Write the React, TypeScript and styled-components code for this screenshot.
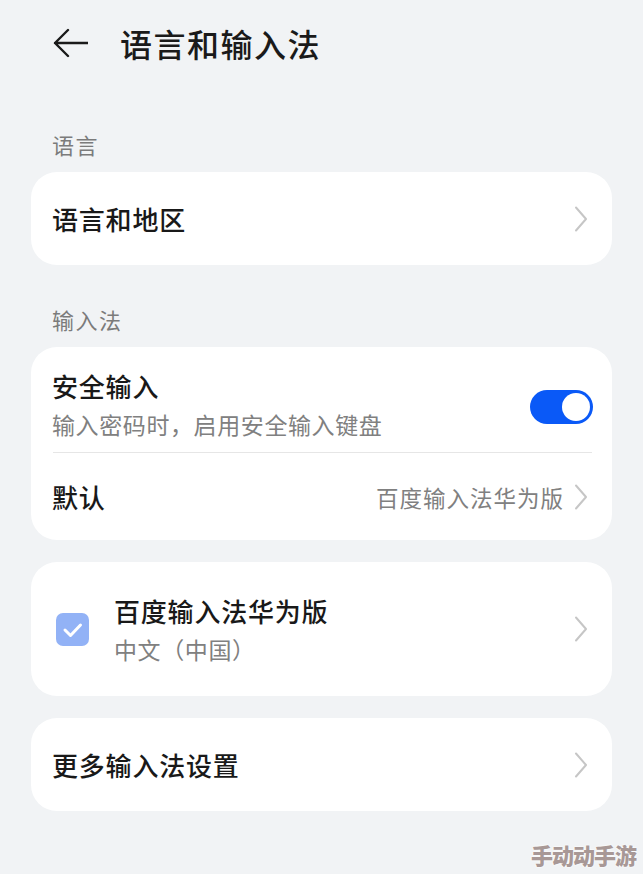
import React, { useState } from "react";
import styled, { createGlobalStyle } from "styled-components";

const GlobalStyle = createGlobalStyle`
  body {
    margin: 0;
    background: #f1f3f5;
    font-family: "Noto Sans CJK SC", "Noto Sans", sans-serif;
    color: #191919;
  }
`;

export default function App() {
  const [safeInput, setSafeInput] = useState(true);

  return (
    <Page>
      <GlobalStyle />
      <Header>
        <BackButton>
          <svg width="35" height="30" viewBox="0 0 35 30" fill="none">
            <path
              d="M15 2 L2 15 L15 28 M2 15 H35"
              stroke="#1a1a1a"
              strokeWidth="2.4"
              strokeLinecap="round"
              strokeLinejoin="round"
            />
          </svg>
        </BackButton>
        <Title>语言和输入法</Title>
      </Header>

      <SectionLabel top={43}>语言</SectionLabel>
      <Card>
        <Row height={93}>
          <ItemTitle>语言和地区</ItemTitle>
          <Chevron />
        </Row>
      </Card>

      <SectionLabel top={39}>输入法</SectionLabel>
      <Card>
        <ToggleRow>
          <TextBlock>
            <ItemTitle>安全输入</ItemTitle>
            <ItemSub>输入密码时，启用安全输入键盘</ItemSub>
          </TextBlock>
          <Switch on={safeInput} onClick={() => setSafeInput(!safeInput)}>
            <Knob />
          </Switch>
        </ToggleRow>
        <Divider />
        <Row height={87}>
          <ItemTitle>默认</ItemTitle>
          <RightSide>
            <ValueText>百度输入法华为版</ValueText>
            <Chevron />
          </RightSide>
        </Row>
      </Card>

      <Card gap={22}>
        <Row height={134}>
          <Left>
            <CheckBox>
              <svg width="33" height="33" viewBox="0 0 33 33">
                <path
                  d="M9 17 L14.5 22.5 L24.5 12"
                  stroke="#ffffff"
                  strokeWidth="3"
                  fill="none"
                  strokeLinecap="round"
                  strokeLinejoin="round"
                />
              </svg>
            </CheckBox>
            <TextBlock>
              <ItemTitle>百度输入法华为版</ItemTitle>
              <ItemSub>中文（中国）</ItemSub>
            </TextBlock>
          </Left>
          <Chevron />
        </Row>
      </Card>

      <Card gap={22}>
        <Row height={93}>
          <ItemTitle>更多输入法设置</ItemTitle>
          <Chevron />
        </Row>
      </Card>

      <Watermark>手动动手游</Watermark>
    </Page>
  );
}

function Chevron() {
  return (
    <ChevronIcon width="14" height="26" viewBox="0 0 14 26" fill="none">
      <path
        d="M2 1.5 L12 13 L2 24.5"
        stroke="#c6c6c6"
        strokeWidth="2"
        strokeLinecap="round"
        strokeLinejoin="round"
      />
    </ChevronIcon>
  );
}

const Page = styled.div`
  position: relative;
  min-height: 874px;
  padding: 0 31px;
  box-sizing: border-box;
  overflow: hidden;
`;

const Header = styled.div`
  display: flex;
  align-items: center;
  height: 86px;
  padding-left: 22px;
`;

const BackButton = styled.div`
  display: flex;
  align-items: center;
  width: 35px;
  height: 30px;
  margin-right: 32px;
`;

const Title = styled.h1`
  margin: 0;
  font-size: 32px;
  font-weight: 500;
  letter-spacing: 1.5px;
  color: #1a1a1a;
`;

const SectionLabel = styled.div<{ top: number }>`
  margin-top: ${(p) => p.top}px;
  margin-bottom: 13px;
  padding-left: 21px;
  font-size: 22px;
  line-height: 30px;
  letter-spacing: 1.5px;
  color: #7b7b7b;
`;

const Card = styled.div<{ gap?: number }>`
  background: #ffffff;
  border-radius: 26px;
  margin-top: ${(p) => p.gap || 0}px;
`;

const Row = styled.div<{ height: number }>`
  display: flex;
  align-items: center;
  justify-content: space-between;
  height: ${(p) => p.height}px;
  padding: 0 24px 0 21px;
`;

const ToggleRow = styled.div`
  display: flex;
  align-items: center;
  justify-content: space-between;
  padding: 21px 19px 11px 21px;
`;

const Left = styled.div`
  display: flex;
  align-items: center;
  gap: 25px;
  padding-left: 4px;
`;

const TextBlock = styled.div`
  display: flex;
  flex-direction: column;
  gap: 3px;
`;

const ItemTitle = styled.div`
  font-size: 26px;
  line-height: 36px;
  font-weight: 500;
  letter-spacing: 0.8px;
  color: #191919;
`;

const ItemSub = styled.div`
  font-size: 23px;
  line-height: 34px;
  letter-spacing: 0.6px;
  color: #808080;
`;

const RightSide = styled.div`
  display: flex;
  align-items: center;
  gap: 10px;
`;

const ValueText = styled.div`
  font-size: 22.5px;
  letter-spacing: 1px;
  color: #808080;
`;

const ChevronIcon = styled.svg`
  flex-shrink: 0;
`;

const Divider = styled.div`
  height: 1px;
  background: #e6e6e6;
  margin: 0 20px 0 22px;
`;

const Switch = styled.div<{ on: boolean }>`
  display: flex;
  align-items: center;
  justify-content: ${(p) => (p.on ? "flex-end" : "flex-start")};
  width: 63px;
  height: 34px;
  padding: 0 3px;
  box-sizing: border-box;
  border-radius: 17px;
  background: ${(p) => (p.on ? "#0a59f7" : "#d3d3d3")};
  margin-top: 4px;
  cursor: pointer;
`;

const Knob = styled.div`
  width: 28px;
  height: 28px;
  border-radius: 50%;
  background: #ffffff;
`;

const CheckBox = styled.div`
  width: 33px;
  height: 33px;
  border-radius: 7px;
  background: #92b2f6;
  display: flex;
`;

const Watermark = styled.div`
  position: absolute;
  right: 7px;
  bottom: 4px;
  font-size: 22px;
  font-weight: 900;
  letter-spacing: -1px;
  color: #a89896;
  text-shadow: 0 0 2px #ffffff, 0 0 2px #ffffff;
`;
